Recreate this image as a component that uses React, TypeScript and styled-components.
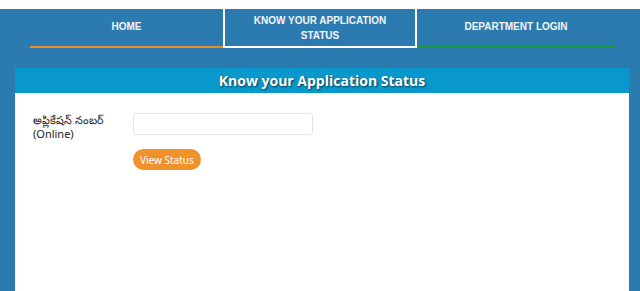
import React, { useState } from 'react'
import styled, { createGlobalStyle } from 'styled-components'

const GlobalStyle = createGlobalStyle`
  html, body {
    margin: 0;
    padding: 0;
    background: #2c7bb0;
  }
  body {
    font-family: "Liberation Sans", Arial, sans-serif;
    overflow: hidden;
  }
`

interface NavItemProps {
  width: number
  accent?: string
  active?: boolean
}

const navLinks: { label: string; width: number; accent?: string; active?: boolean }[] = [
  { label: 'HOME', width: 193, accent: '#e98d26' },
  { label: 'KNOW YOUR APPLICATION STATUS', width: 194, active: true },
  { label: 'DEPARTMENT LOGIN', width: 198, accent: '#179a3c' },
]

const App: React.FC = () => {
  const [appNo, setAppNo] = useState('')

  return (
    <>
      <GlobalStyle />
      <StyledPage>
        <StyledTopStrip />
        <StyledNav>
          {navLinks.map(link => (
            <StyledNavItem
              key={link.label}
              width={link.width}
              accent={link.accent}
              active={link.active}
            >
              <StyledNavText>{link.label}</StyledNavText>
            </StyledNavItem>
          ))}
        </StyledNav>
        <StyledCard>
          <StyledCardHeader>Know your Application Status</StyledCardHeader>
          <StyledCardBody>
            <StyledFormRow>
              <StyledLabel>
                <StyledLabelLine>అప్లికేషన్ నంబర్</StyledLabelLine>
                <StyledLabelLine>(Online)</StyledLabelLine>
              </StyledLabel>
              <StyledInput
                type="text"
                value={appNo}
                onChange={e => setAppNo(e.target.value)}
              />
            </StyledFormRow>
            <StyledActions>
              <StyledButton>View Status</StyledButton>
            </StyledActions>
          </StyledCardBody>
        </StyledCard>
      </StyledPage>
    </>
  )
}

const StyledPage = styled.div`
  width: 640px;
  height: 291px;
  background: #2c7bb0;
  display: flex;
  flex-direction: column;
`

const StyledTopStrip = styled.div`
  height: 9px;
  background: #ffffff;
`

const StyledNav = styled.nav`
  display: flex;
  margin-left: 30px;
  height: 39px;
`

const StyledNavItem = styled.div<NavItemProps>`
  box-sizing: border-box;
  width: ${props => props.width}px;
  display: flex;
  align-items: center;
  justify-content: center;
  padding: 0 12px 2px;
  border-bottom: 2px solid ${props => props.accent || 'transparent'};
  ${props => props.active && `
    border: 2px solid #ffffff;
    border-top: none;
    padding: 1px 12px 0;
    height: 39px;
  `}
`

const StyledNavText = styled.span`
  color: #f2f6fa;
  font-size: 10px;
  font-weight: 700;
  line-height: 15px;
  text-align: center;
`

const StyledCard = styled.div`
  margin: 20px 11px 0 15px;
  flex: 1;
  background: #ffffff;
  display: flex;
  flex-direction: column;
`

const StyledCardHeader = styled.div`
  height: 25px;
  background: #0998cb;
  color: #ffffff;
  font-family: "Open Sans", sans-serif;
  font-weight: 700;
  font-size: 14px;
  line-height: 25px;
  text-align: center;
  text-shadow: 1px 1px 2px rgba(0, 0, 0, 0.6);
`

const StyledCardBody = styled.div`
  padding: 20px 18px;
  display: flex;
  flex-direction: column;
  gap: 9px;
`

const StyledFormRow = styled.div`
  display: flex;
  align-items: flex-start;
`

const StyledLabel = styled.label`
  width: 100px;
  display: flex;
  flex-direction: column;
  gap: 1px;
  font-family: "Noto Sans", "Open Sans", sans-serif;
  font-size: 11px;
  color: #1a1a1a;
`

const StyledLabelLine = styled.span`
  display: block;
  line-height: 13px;
  white-space: nowrap;
`

const StyledInput = styled.input`
  box-sizing: border-box;
  width: 180px;
  height: 22px;
  border: 1px solid #e6e6e6;
  border-radius: 3px;
  outline: none;
  padding: 0 6px;
`

const StyledActions = styled.div`
  padding-left: 100px;
`

const StyledButton = styled.button`
  height: 21px;
  padding: 0 7px;
  border: none;
  border-radius: 11px;
  background: #f0922b;
  color: #ffffff;
  font-family: "Noto Sans", sans-serif;
  font-size: 10px;
  cursor: pointer;
`

export default App
